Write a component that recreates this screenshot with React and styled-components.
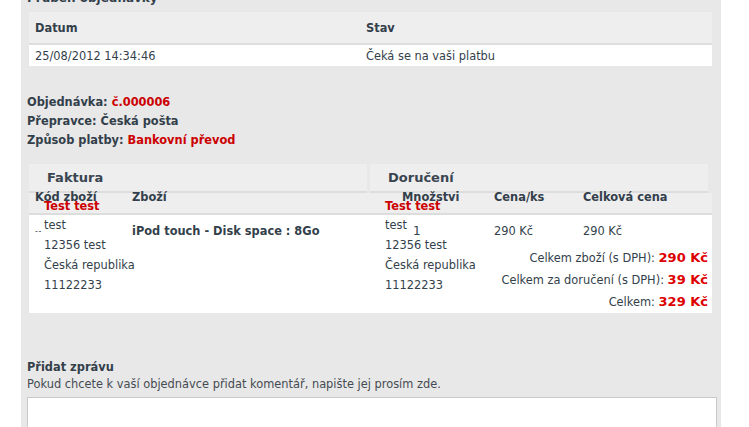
import React from 'react'
import styled, { createGlobalStyle } from 'styled-components'

const GlobalStyle = createGlobalStyle`
    body {
        margin: 0;
        background: #fff;
        font-family: "DejaVu Sans", Verdana, sans-serif;
        font-size: 11.4px;
        color: #333f4b;
    }
`

const Page = styled.div`
    padding-left: 21px;
    width: 700px;
`

const Panel = styled.div`
    display: flow-root;
    background: #e8e8e8;
    padding: 0 4px 0 6px;
    min-height: 427px;
`

const Title = styled.div`
    margin-top: -10px;
    line-height: 16px;
    font-size: 12px;
    font-weight: bold;
`

const StatusTable = styled.div`
    margin: 6px 0 0 2px;
    width: 683px;
`

const StatusRow = styled.div`
    display: grid;
    grid-template-columns: 331px 1fr;
    align-items: center;
    height: ${p => p.head ? 31 : 21}px;
    background: ${p => p.head ? '#eeeeee' : '#ffffff'};
    border-bottom: ${p => p.head ? '2px solid #dddddd' : 'none'};
    font-weight: ${p => p.head ? 'bold' : 'normal'};
`

const Cell = styled.div`
    padding-left: 6px;
    white-space: nowrap;
`

const Info = styled.div`
    margin-top: 27px;
    line-height: 19px;
    font-weight: bold;
`

const Red = styled.span`
    color: #cc0000;
`

const OrderBox = styled.div`
    margin: 14px 0 0 2px;
    width: 683px;
`

const SectionHeads = styled.div`
    display: flex;
    gap: 3px;
`

const SectionHead = styled.div`
    width: 320px;
    height: 27px;
    padding-left: 18px;
    display: flex;
    align-items: center;
    background: #eeeeee;
    border-bottom: 2px solid #dddddd;
    font-size: 13px;
    font-weight: bold;
    color: #3a4550;
`

const ColHeads = styled.div`
    display: grid;
    grid-template-columns: 97px 253px 109px 89px 135px;
    height: 20px;
    background: #eeeeee;
    border-bottom: 2px solid #dddddd;
    font-weight: bold;
    line-height: 9px;
`

const HeadCell = styled.div`
    padding: 0 0 0 6px;
    white-space: nowrap;
`

const HeadLabel = styled.div`
    padding-left: ${p => p.indent || 0}px;
`

const HeadSub = styled.div`
    padding-left: ${p => p.indent || 0}px;
    color: #cc0000;
`

const Body = styled.div`
    display: grid;
    grid-template-columns: 97px 253px 109px 89px 135px;
    grid-template-rows: auto 1fr;
    background: #fff;
    min-height: 97px;
`

const Address = styled.div`
    grid-column: ${p => p.col};
    grid-row: 1 / 3;
    padding-left: ${p => p.pad}px;
    line-height: 20px;
    white-space: nowrap;
`

const FirstLine = styled.div`
    height: 20px;
`

const Dashes = styled.span`
    display: inline-block;
    width: 9px;
    margin-left: -9px;
    font-size: 8px;
    line-height: 8px;
    letter-spacing: 0.5px;
    vertical-align: -5px;
`

const Low = styled.span`
    margin-left: 6px;
    font-size: 12px;
    line-height: 12px;
    vertical-align: -6px;
`

const ItemCell = styled.div`
    grid-column: ${p => p.col};
    padding: 6px 0 0 6px;
    line-height: 20px;
    font-weight: ${p => p.bold ? 'bold' : 'normal'};
    white-space: nowrap;
`

const Totals = styled.div`
    grid-column: 4 / 6;
    display: flex;
    flex-direction: column;
    align-items: flex-end;
    padding: 6px 4px 0 0;
`

const TotalLine = styled.div`
    line-height: 22px;
    white-space: nowrap;
`

const Amount = styled.span`
    color: #dd0000;
    font-size: 13px;
    font-weight: bold;
`

const Message = styled.div`
    margin-top: 46px;
`

const MessageTitle = styled.div`
    line-height: 17px;
    font-weight: bold;
`

const Hint = styled.div`
    line-height: 17px;
    color: #454b52;
`

const Comment = styled.textarea`
    display: block;
    box-sizing: border-box;
    width: 690px;
    height: 110px;
    margin-top: 4px;
    border: 1px solid #c9c9c9;
    background: #fff;
    resize: none;
    font-family: inherit;
`

const history = [{date: '25/08/2012 14:34:46', state: 'Čeká se na vaši platbu'}]

const address = ['12356 test', 'Česká republika', '11122233']

const totals = [
    {label: 'Celkem zboží (s DPH):', value: '290 Kč'},
    {label: 'Celkem za doručení (s DPH):', value: '39 Kč'},
    {label: 'Celkem:', value: '329 Kč'},
]

export default function App() {
    return (
        <Page>
            <GlobalStyle/>
            <Panel>
                <Title>Průběh objednávky</Title>

                <StatusTable>
                    <StatusRow head>
                        <Cell>Datum</Cell>
                        <Cell>Stav</Cell>
                    </StatusRow>
                    {
                        history.map((h, i) =>
                            <StatusRow key={'h' + i}>
                                <Cell>{h.date}</Cell>
                                <Cell>{h.state}</Cell>
                            </StatusRow>
                        )
                    }
                </StatusTable>

                <Info>
                    <div>Objednávka: <Red>č.000006</Red></div>
                    <div>Přepravce: Česká pošta</div>
                    <div>Způsob platby: <Red>Bankovní převod</Red></div>
                </Info>

                <OrderBox>
                    <SectionHeads>
                        <SectionHead>Faktura</SectionHead>
                        <SectionHead>Doručení</SectionHead>
                    </SectionHeads>

                    <ColHeads>
                        <HeadCell>
                            <HeadLabel>Kód zboží</HeadLabel>
                            <HeadSub indent={9}>Test test</HeadSub>
                        </HeadCell>
                        <HeadCell><HeadLabel>Zboží</HeadLabel></HeadCell>
                        <HeadCell>
                            <HeadLabel indent={17}>Množstvi</HeadLabel>
                            <HeadSub>Test test</HeadSub>
                        </HeadCell>
                        <HeadCell><HeadLabel>Cena/ks</HeadLabel></HeadCell>
                        <HeadCell><HeadLabel>Celková cena</HeadLabel></HeadCell>
                    </ColHeads>

                    <Body>
                        <Address col={1} pad={15}>
                            <FirstLine><Dashes>--</Dashes>test</FirstLine>
                            {address.map((a, i) => <div key={'a' + i}>{a}</div>)}
                        </Address>
                        <ItemCell col={2} bold>iPod touch - Disk space : 8Go</ItemCell>
                        <Address col={3} pad={6}>
                            <FirstLine>test<Low>1</Low></FirstLine>
                            {address.map((a, i) => <div key={'b' + i}>{a}</div>)}
                        </Address>
                        <ItemCell col={4}>290 Kč</ItemCell>
                        <ItemCell col={5}>290 Kč</ItemCell>
                        <Totals>
                            {
                                totals.map((t, i) =>
                                    <TotalLine key={'t' + i}>{t.label} <Amount>{t.value}</Amount></TotalLine>
                                )
                            }
                        </Totals>
                    </Body>
                </OrderBox>

                <Message>
                    <MessageTitle>Přidat zprávu</MessageTitle>
                    <Hint>Pokud chcete k vaší objednávce přidat komentář, napište jej prosím zde.</Hint>
                    <Comment/>
                </Message>
            </Panel>
        </Page>
    )
}
